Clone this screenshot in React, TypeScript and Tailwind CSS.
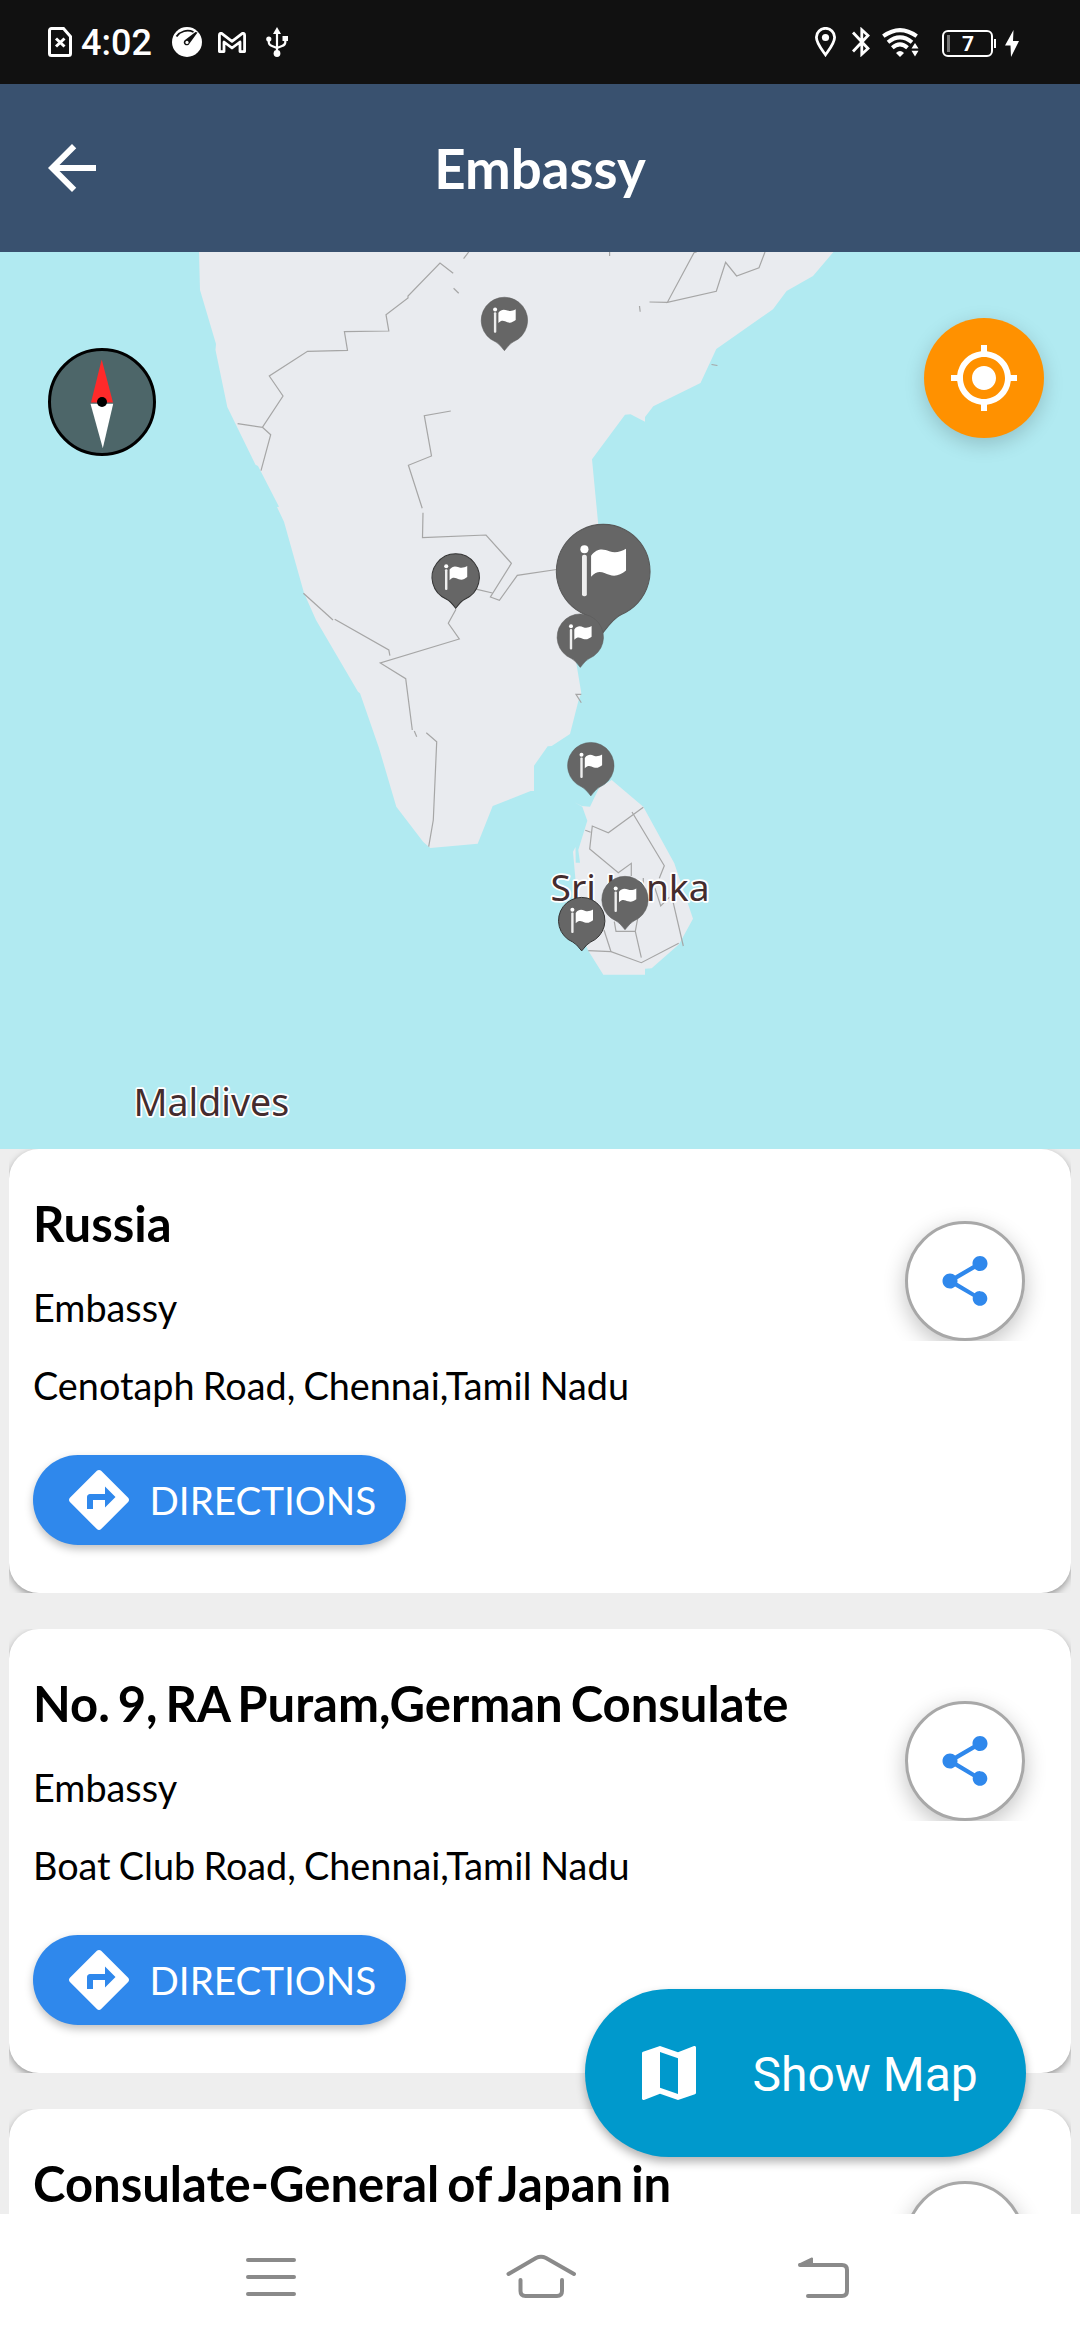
import React from "react";

const places: { name: string; address?: string }[] = [
  { name: "Russia", address: "Cenotaph Road, Chennai,Tamil Nadu" },
  { name: "No. 9, RA Puram,German Consulate", address: "Boat Club Road, Chennai,Tamil Nadu" },
  { name: "Consulate-General of Japan in" },
];

const pins = [
  { x: 504.4, y: 320.3, scale: 1, outline: false },
  { x: 455.7, y: 577.3, scale: 1.02, outline: true },
  { x: 603.2, y: 571, scale: 2.02, outline: false },
  { x: 580.3, y: 637, scale: 1, outline: false },
  { x: 590.8, y: 765.5, scale: 1, outline: false },
  { x: 625, y: 899.4, scale: 1, outline: false },
  { x: 581.7, y: 920.5, scale: 1, outline: true },
];

const borders = [
  "468.7,252 463.6,258.7",
  "453.2,273.3 440,263 408,296 408,298 386,314.7 388.8,331 344.4,331.7 347.5,350.3 307.5,351.3 269.3,376 283,396 262.4,427.3 237.6,423.7",
  "262.4,427.3 270.7,434.7 261,470.7",
  "453.6,288.3 458.7,293.3",
  "450.8,411 424.3,415.7 431.5,456 408.4,465.3 422.2,508.3",
  "423,512.7 422.5,537.7 486,535 511.4,563.3 490.4,597 499.4,600.3 517.3,575.3 560,569",
  "477,589.3 492.5,593",
  "303.4,593.3 333,620",
  "334.7,619.3 388.8,650 389.9,655.7",
  "456,609.3 448.3,623.3 459.3,639 380.3,663 405.7,678.7 412.3,730",
  "414.3,731 416.7,736.7",
  "426.3,732.7 436.7,741.7 433.3,820 428.7,846.7",
  "581.3,694.3 576,694.3 581.3,702.7",
  "609.6,252 609.6,256",
  "696.7,252 694,252.7 667.4,302.3 716.3,291.3 725.6,262.3 736.6,276 759,267.7 765,252",
  "649.5,302 667.4,302.3",
  "639.5,306 640.2,311.7",
  "711.5,364.5 717.4,365.5",
  "643.3,807.3 608.3,832.7 592.3,826 589.7,849 618.3,872.7 631.3,863.3 631.3,876",
  "585.3,830.3 590.7,832.3",
  "632,812 664.3,865.7 659.3,878.3",
  "655,888.3 660.7,906 669.3,897.3",
  "673,901.7 683.3,946",
  "678.7,943.3 641.3,962.7 611,951.7 588.3,950.7",
  "611,951.7 604,930",
  "614.3,921.7 616,931.3 635.3,931.3 637.7,918.3",
  "635.3,931.3 641.3,957.7",
  "643.3,878 643.3,887",
];

function Icon({ d, className }: { d: string; className: string }) {
  return (
    <svg viewBox="0 0 24 24" fill="currentColor" className={className}>
      <path d={d} />
    </svg>
  );
}

function StatusBar() {
  return (
    <div className="flex h-[84px] items-center bg-[#111111] pl-[48px] pr-[61px] text-white">
      <svg className="h-[30px] w-[24px]" viewBox="0 0 24 30" fill="none" stroke="white" strokeWidth="3">
        <path d="M3.5 1.5H15.5L22.5 9.5V26.5a2 2 0 0 1-2 2H3.5a2 2 0 0 1-2-2V3.5a2 2 0 0 1 2-2Z" />
        <path d="M8 11.5L16.5 19.5M16.5 11.5L8 19.5" strokeWidth="3" />
      </svg>
      <span className="ml-[9px] mt-[2px] w-[91px] whitespace-nowrap font-['Roboto'] text-[36px] leading-[40px] font-medium">4:02</span>
      <svg className="h-[30px] w-[30px]" viewBox="0 0 30 30">
        <circle cx="15" cy="15" r="15" fill="white" />
        <path d="M4.5 9.5C8 4.5 15 2 21.5 5" fill="none" stroke="#111" strokeWidth="1.8" />
        <path d="M25.5 5.5L17.5 16.5a3 3 0 1 1-4.5-3.6L23.5 5" fill="#111" />
        <circle cx="15" cy="15.4" r="1.6" fill="white" />
      </svg>
      <svg className="ml-[16px] h-[21px] w-[28px]" viewBox="0 0 28 21" fill="none" stroke="white" strokeWidth="2.8" strokeLinejoin="round">
        <path d="M1.4 19.6V3.2Q1.5 1 3.6 1.4L14 9.3L24.4 1.4Q26.5 1 26.6 3.2V19.6H22V10L14 16L6 10V19.600Z" />
      </svg>
      <svg className="ml-[19.5px] h-[30px] w-[22px]" viewBox="0 0 22 30" fill="white">
        <path d="M11 0L15 7H7Z" />
        <circle cx="11" cy="26.5" r="3.4" />
        <circle cx="2.8" cy="12" r="2.6" />
        <path d="M16.5 9H22V14H16.5Z" />
        <path d="M11 5V27M2.8 12V15.5Q3 18 6 19L11 21M19.3 13V15.5Q19 18 16 19L11 21" fill="none" stroke="white" strokeWidth="2.2" />
      </svg>
      <div className="ml-auto flex items-center">
        <svg className="h-[30px] w-[21px]" viewBox="0 0 21 30" fill="none" stroke="white" strokeWidth="2.8">
          <path d="M10.5 27.8C6 21.5 1.4 16 1.4 10.2a9.1 8.9 0 0 1 18.2 0C19.6 16 15 21.5 10.5 27.8Z" />
          <circle cx="10.5" cy="10.5" r="3.6" fill="white" stroke="none" />
        </svg>
        <svg className="ml-[16px] h-[30px] w-[18px]" viewBox="0 0 18 30" fill="none" stroke="white" strokeWidth="2.8">
          <path d="M1 5.5L16 21.5L9.8 27.2V2.8L16 8.5L1 24.5" />
        </svg>
        <svg className="ml-[12px] h-[29px] w-[37px]" viewBox="0 0 37 29">
          <g fill="none" stroke="white" strokeWidth="4">
            <path d="M1.3 8.2Q18 -4 34.7 8.2" />
            <path d="M6 14.2Q18 4.5 30 14.2" />
            <path d="M10.3 19.8Q18 13 25.5 19.8" />
          </g>
          <path d="M14 25Q18 21 22 25L18 29Z" fill="white" />
          <path d="M29.5 20.5L33 15L36.5 20.5ZM29.5 22.8L33 28.5L36.5 22.8Z" fill="white" />
        </svg>
        <div className="ml-[23px] mt-[3px] flex h-[27px] w-[51px] items-center rounded-[6px] border-2 border-white pl-[3px]">
          <span className="h-[17px] w-[3px] bg-[#777777]" />
          <span className="ml-[12px] font-['Roboto'] text-[21px] leading-[24px] font-bold">7</span>
        </div>
        <span className="ml-px mt-[3px] h-[9px] w-[2px] bg-white" />
        <svg className="ml-[9px] mt-[3px] h-[27px] w-[14px]" viewBox="0 0 14 27" fill="white">
          <path d="M8.5 0L0 15.5H5.5L6 27L14 11H8Z" />
        </svg>
      </div>
    </div>
  );
}

function Header() {
  return (
    <header className="grid h-[168px] grid-cols-[108px_1fr_108px] items-center bg-[#39516f] text-white">
      <Icon className="ml-[36px] size-[72px]" d="M20 11H7.83l5.59-5.59L12 4l-8 8 8 8 1.41-1.41L7.83 13H20v-2z" />
      <h1 className="text-center text-[54.6px] leading-[66px] font-bold">Embassy</h1>
    </header>
  );
}

function Pin({ x, y, scale, outline }: { x: number; y: number; scale: number; outline: boolean }) {
  return (
    <g transform={`translate(${x} ${y}) scale(${scale})`}>
      <path
        d="M-9 21.5A23.2 23.2 0 1 1 9 21.5Q5.5 23 0 30.4Q-5.5 23 -9 21.5Z"
        fill="#666666"
        stroke={outline ? "#333333" : "#595959"}
        strokeWidth={outline ? 1 : 0.5}
      />
      <circle cx="-9.3" cy="-10.8" r="2" fill="white" />
      <rect x="-10.5" y="-8" width="2.4" height="20.5" rx="1" fill="#eeeeee" />
      <path d="M-6 -7.6C-3 -11.5 0 -11 3 -9.8C6 -8.7 8.5 -9.5 11.3 -11V-0.2C8.5 2 6 3 3 1.9C0 0.8 -2.5 -1 -6 2.8Z" fill="white" />
    </g>
  );
}

function MapView() {
  return (
    <section className="relative h-[897px] bg-[#b1eaf1]">
      <svg className="block h-[897px] w-[1080px]" viewBox="0 252 1080 897">
        <g fill="#e9ebef">
          <polygon points="199,252 200,290 216,344 215.5,350 227.3,407 255.5,464.7 258,466 279,506.7 277,507 284,521.7 304,593 316,620 358,691.7 360,693.3 379,748 396.3,806.7 423.3,842 430.3,848 477.7,843.7 492.7,806 530.7,791 534,791 534,765.7 547.7,746.3 551.7,746 570,734 578.5,700.6 581.3,693 576.3,663 585,620 604,590 600,540 598.2,524 592,459.3 625,414.7 630.6,414.3 645,421.7 645,417 653.3,406.3 700.5,383 716.3,349 773,309.3 786.6,291 813,276 833.4,252" />
          <polygon points="611.7,780 643.3,806.7 674.3,863.3 693,918.7 679,944.3 651.7,968.3 645,968.7 645,974.7 603.3,974.7 588.3,950.7 575,920 577,897 573,851.7 575.5,847 575.7,862.7 580,862.7 578.3,850 587.3,820.7 582.3,806.7 574.3,802.3 581.7,806 590,806.7 599,788" />
        </g>
        <g fill="none" stroke="#a6a6a6" strokeWidth="1.2">
          {borders.map((points) => (
            <polyline key={points} points={points} />
          ))}
        </g>
        <g className="font-['Noto_Sans']" fill="#442c2e" stroke="white" strokeWidth="3.5" strokeLinejoin="round" paintOrder="stroke">
          <text className="text-[37.2px]" x="550.5" y="901">Sri Lanka</text>
          <text className="text-[37.5px]" x="133.5" y="1116">Maldives</text>
        </g>
        {pins.map((pin) => (
          <Pin key={`${pin.x}-${pin.y}`} {...pin} />
        ))}
      </svg>
      <svg className="absolute left-[48px] top-[96px] size-[108px]" viewBox="0 0 108 108">
        <circle cx="54" cy="54" r="52.5" fill="#4d6669" stroke="black" strokeWidth="3" />
        <path d="M53.7 11.5L65 54.5H43Z" fill="#ff2a2a" />
        <path d="M42.5 55.7H65.2L54.8 100.3Z" fill="white" />
        <circle cx="54" cy="54" r="5" fill="black" />
      </svg>
      <button className="absolute left-[924px] top-[66px] flex size-[120px] items-center justify-center rounded-full bg-[#ff9100] text-white shadow-[0_6px_20px_rgba(0,0,0,0.18)]">
        <Icon
          className="size-[72px]"
          d="M12 8c-2.21 0-4 1.79-4 4s1.79 4 4 4 4-1.79 4-4-1.79-4-4-4zm8.94 3A8.994 8.994 0 0 0 13 3.06V1h-2v2.06A8.994 8.994 0 0 0 3.06 11H1v2h2.06A8.994 8.994 0 0 0 11 20.94V23h2v-2.06A8.994 8.994 0 0 0 20.94 13H23v-2h-2.06zM12 19c-3.87 0-7-3.13-7-7s3.13-7 7-7 7 3.13 7 7-3.13 7-7 7z"
        />
      </button>
    </section>
  );
}

function PlaceCard({ name, address }: { name: string; address?: string }) {
  return (
    <div className="h-[444px] shrink-0 overflow-hidden">
      <article className="flex h-full justify-between rounded-[30px] bg-white pl-[24px] shadow-[0_3px_7px_rgba(0,0,0,0.36)]">
        <div className="flex flex-col items-start pt-[45px] text-black">
          <h2 className="whitespace-nowrap text-[49px] leading-[58px] font-bold [word-spacing:-4px]">{name}</h2>
          {address && (
            <>
              <p className="mt-[32px] text-[37.8px] leading-[48px]">Embassy</p>
              <p className="mt-[30px] whitespace-nowrap text-[37.8px] leading-[48px] [word-spacing:-1.500px]">{address}</p>
              <button className="mt-[45px] flex h-[90px] w-[373px] items-center rounded-full bg-[#2f88ec] pl-[30px] text-white shadow-[0_4px_8px_rgba(0,0,0,0.25)]">
                <Icon
                  className="size-[72px]"
                  d="M21.71 11.29l-9-9c-.39-.39-1.02-.39-1.41 0l-9 9c-.39.39-.39 1.02 0 1.41l9 9c.39.39 1.02.39 1.41 0l9-9c.39-.38.39-1.01 0-1.41zM14 14.5V12h-4v3H8v-4c0-.55.45-1 1-1h5V7.5l3.5 3.5-3.5 3.5z"
                />
                <span className="-mt-px ml-[14.5px] text-[38.6px] leading-[48px]">DIRECTIONS</span>
              </button>
            </>
          )}
        </div>
        <div className="mr-[16px] mt-[42px] h-[150px] w-[180px] shrink-0 overflow-hidden px-[30px] pt-[30px]">
          <button className="flex size-[120px] items-center justify-center rounded-full border-[3px] border-[#a8a8a8] bg-white text-[#2f88ec] shadow-[0_7px_22px_rgba(0,0,0,0.24)]">
            <Icon
              className="size-[60px]"
              d="M18 16c-.83 0-1.58.34-2.12.87L8.91 12.7c.05-.23.09-.46.09-.7s-.04-.47-.09-.7l7.05-4.11c.54.5 1.25.81 2.04.81 1.66 0 3-1.34 3-3s-1.34-3-3-3-3 1.34-3 3c0 .24.04.47.09.7L8.04 9.81C7.5 9.31 6.79 9 6 9c-1.66 0-3 1.34-3 3s1.34 3 3 3c.79 0 1.5-.31 2.04-.81l7.12 4.16c-.05.21-.08.43-.08.65 0 1.61 1.31 2.92 2.92 2.92s2.92-1.31 2.92-2.92-1.31-2.92-2.92-2.92z"
            />
          </button>
        </div>
      </article>
    </div>
  );
}

function NavigationBar() {
  return (
    <nav className="flex h-[126px] items-center bg-white pl-[244px]">
      <svg className="h-[42px] w-[54px]" viewBox="244 2256 54 42" fill="none" stroke="#8a8a8a" strokeWidth="4" strokeLinecap="round">
        <path d="M248 2260H294M248 2277H294M248 2294H294" />
      </svg>
      <svg className="ml-[206px] h-[46px] w-[74px]" viewBox="504 2254 74 46" fill="none" stroke="#8a8a8a" strokeWidth="4" strokeLinecap="round">
        <path d="M508.5 2274L536 2258Q541 2255.500 546 2258L574 2274" />
        <path d="M520.500 2280V2291Q520.500 2296 525.500 2296H557Q562 2296 562 2291V2280" />
      </svg>
      <svg className="ml-[216px] h-[46px] w-[60px]" viewBox="794 2252 60 46" fill="none" stroke="#8a8a8a" strokeWidth="4" strokeLinecap="round">
        <path d="M800 2263H842Q847 2263 847 2268V2289Q847 2294 842 2294H808" />
        <path d="M799.500 2262.500L812 2256.500V2263Z" fill="#8a8a8a" strokeWidth="2" strokeLinejoin="round" />
      </svg>
    </nav>
  );
}

export default function App() {
  return (
    <main className="relative flex h-[2340px] w-[1080px] flex-col overflow-hidden bg-white font-['Lato',sans-serif]">
      <StatusBar />
      <Header />
      <MapView />
      <section className="flex h-[1065px] flex-col gap-[36px] overflow-hidden bg-[#eeeeee] px-[9px]">
        {places.map((place) => (
          <PlaceCard key={place.name} {...place} />
        ))}
      </section>
      <NavigationBar />
      <button className="absolute left-[585px] top-[1989px] flex h-[168px] w-[441px] items-center rounded-full bg-[#0099cc] pl-[48px] text-white shadow-[0_5px_10px_rgba(0,0,0,0.3)]">
        <Icon
          className="size-[72px]"
          d="M20.5 3l-.16.03L15 5.100 9 3 3.360 4.900c-.21.07-.36.25-.36.48V20.500c0 .28.22.5.5.5l.16-.03L9 18.900l6 2.100 5.640-1.900c.21-.07.36-.25.36-.48V3.500c0-.28-.22-.5-.5-.5zM15 19l-6-2.110V5l6 2.110V19z"
        />
        <span className="ml-[47.5px] mt-[3px] whitespace-nowrap font-['Roboto'] text-[48px] leading-[56px]">Show Map</span>
      </button>
    </main>
  );
}
